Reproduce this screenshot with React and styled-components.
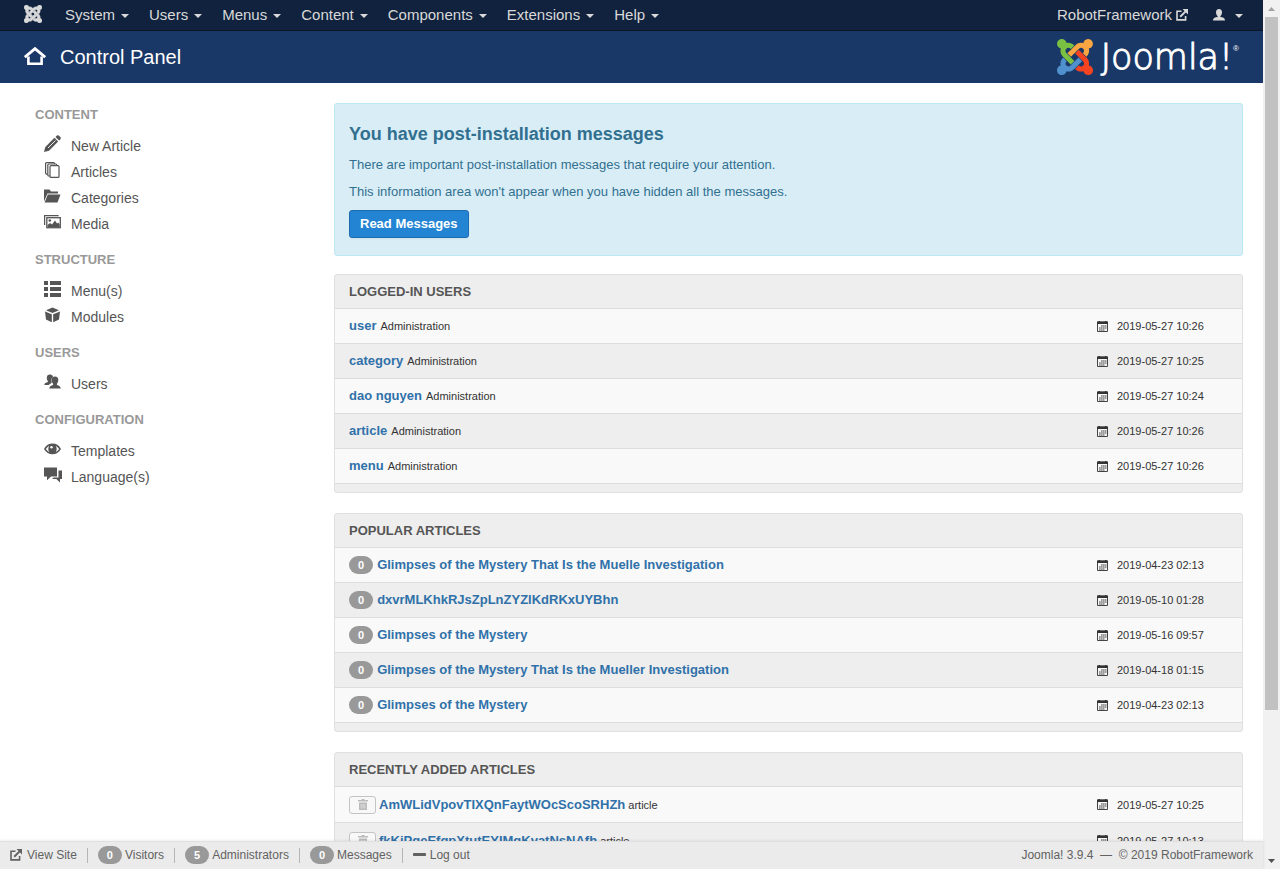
import React from "react";
import styled, { createGlobalStyle } from "styled-components";

const GlobalStyle = createGlobalStyle`
  * { box-sizing: border-box; }
  body {
    margin: 0;
    background: #fff;
    color: #333;
    font-family: "Liberation Sans", Arial, sans-serif;
    font-size: 13px;
    line-height: 18px;
  }
  a { text-decoration: none; }
  h1, h2, h3, p, ul { margin: 0; padding: 0; }
  ul { list-style: none; }
  svg { display: block; flex: none; }
`;

/* ---------- layout ---------- */

const Shell = styled.div`
  display: flex;
  height: 100vh;
  overflow: hidden;
`;

const Page = styled.div`
  flex: 1;
  min-width: 0;
  display: flex;
  flex-direction: column;
`;

const NavBar = styled.nav`
  flex: none;
  display: flex;
  align-items: center;
  height: 31px;
  padding: 0 10px 0 24px;
  background: #10223e;
  border-bottom: 1px solid #0c1526;
`;

const NavBrand = styled.a`
  display: flex;
  margin-right: 13px;
  padding-bottom: 2px;
  color: #d9d9d9;
`;

const NavItem = styled.a`
  display: flex;
  align-items: center;
  gap: ${(p) => p.$gap || 6}px;
  padding: 0 10px;
  font-size: 15px;
  line-height: 30px;
  color: #d9d9d9;
`;

const NavEnd = styled.div`
  display: flex;
  gap: 5px;
  margin-left: auto;
`;

const Caret = styled.span`
  margin-top: 1px;
  border: 4px solid transparent;
  border-top-color: #d9d9d9;
  border-bottom: 0;
`;

const TitleBar = styled.header`
  flex: none;
  display: flex;
  align-items: center;
  height: 52px;
  padding: 0 24px;
  background: #1a3867;
  color: #fff;
`;

const PageTitle = styled.h1`
  display: flex;
  align-items: center;
  gap: 14px;
  flex: 1;
  font-size: 20px;
  line-height: 24px;
  font-weight: 400;
`;

const Logo = styled.a`
  display: flex;
  align-items: center;
  gap: 8px;
  color: #fff;
`;

const Wordmark = styled.span`
  display: flex;
  align-items: flex-start;
  font-family: "DejaVu Sans Light", "DejaVu Sans ExtraLight", "DejaVu Sans", sans-serif;
  font-weight: 200;
  font-size: 35px;
  line-height: 40px;
  -webkit-text-stroke: 1px #fff;
`;

const Registered = styled.sup`
  font-family: "Liberation Sans", Arial, sans-serif;
  font-size: 8px;
  line-height: 24px;
  -webkit-text-stroke: 0;
`;

const Content = styled.div`
  flex: 1;
  min-height: 0;
  overflow: hidden;
  display: grid;
  grid-template-columns: 288px minmax(0, 1fr);
  column-gap: 26px;
  padding: 20px 20px 0;
`;

/* ---------- sidebar ---------- */

const Sidebar = styled.aside`
  display: flex;
  flex-direction: column;
  gap: 14px;
  padding: 3px 0 0 15px;
`;

const GroupTitle = styled.h2`
  margin-bottom: 9px;
  font-size: 13px;
  line-height: 18px;
  font-weight: 700;
  color: #999;
  text-transform: uppercase;
`;

const SideLink = styled.a`
  display: flex;
  align-items: center;
  gap: 9px;
  padding-left: 9px;
  font-size: 14px;
  line-height: 26px;
  color: #555;
  svg { margin-bottom: 4px; }
`;

/* ---------- main column ---------- */

const Alert = styled.section`
  padding: 20px 14px 17px;
  margin-bottom: 18px;
  background: #d9edf7;
  border: 1px solid #bce8f1;
  border-radius: 3px;
  color: #31708f;
`;

const AlertTitle = styled.h2`
  margin-bottom: 12px;
  font-size: 18px;
  line-height: 20px;
  font-weight: 700;
`;

const AlertText = styled.p`
  margin-bottom: 9px;
`;

const PrimaryButton = styled.button`
  display: block;
  height: 28px;
  padding: 0 10px;
  font: 700 13px/18px "Liberation Sans", Arial, sans-serif;
  color: #fff;
  background: #2384d3;
  border: 1px solid #1d6cb0;
  border-radius: 3px;
  box-shadow: 0 1px 2px rgba(0, 0, 0, 0.05);
`;

const Panel = styled.section`
  margin-bottom: 20px;
  padding-bottom: 8px;
  background: #eee;
  border: 1px solid #e0e0e0;
  border-radius: 3px;
`;

const PanelTitle = styled.h2`
  padding: 0 14px;
  font-size: 13px;
  line-height: 33px;
  font-weight: 700;
  color: #555;
  text-transform: uppercase;
`;

const RowList = styled.ul`
  border-bottom: 1px solid #ddd;
`;

const Row = styled.li`
  display: flex;
  align-items: center;
  height: ${(p) => (p.$tall ? 36 : 35)}px;
  padding: 0 14px;
  border-top: 1px solid #ddd;
  background: #f9f9f9;
  &:nth-child(even) { background: #eee; }
`;

const RowMain = styled.div`
  flex: 1;
  min-width: 0;
  display: flex;
  align-items: baseline;
  gap: ${(p) => (p.$tight ? 3 : 4)}px;
`;

const RowLink = styled.a`
  font-weight: 700;
  color: #3071a9;
`;

const Small = styled.small`
  font-size: 11px;
`;

const DateCell = styled.time`
  display: flex;
  align-items: center;
  gap: 9px;
  width: 131px;
  font-size: 11px;
  color: #333;
`;

const Badge = styled.span`
  display: inline-block;
  padding: 2px 9px;
  border-radius: 9px;
  background: #999;
  color: #fff;
  font-size: 11px;
  line-height: 14px;
  font-weight: 700;
`;

const TrashButton = styled.button`
  align-self: center;
  display: flex;
  align-items: center;
  justify-content: center;
  width: 27px;
  height: 18px;
  padding: 0;
  color: #bbb;
  background: #f8f8f8;
  border: 1px solid #c4c4c4;
  border-radius: 3px;
`;

/* ---------- status bar ---------- */

const StatusBar = styled.footer`
  flex: none;
  position: relative;
  display: flex;
  align-items: center;
  height: 28px;
  padding: 0 10px 1px;
  background: #ebebeb;
  border-top: 1px solid #e0e0e0;
  box-shadow: 0 0 3px rgba(0, 0, 0, 0.12);
  font-size: 12px;
  color: #626262;
`;

const StatusItem = styled.a`
  display: flex;
  align-items: center;
  gap: ${(p) => p.$gap || 3}px;
  color: #626262;
  a + & {
    margin-left: 10px;
  }
  a + &::before {
    content: "";
    width: 1px;
    height: 15px;
    margin-right: ${(p) => 10 - (p.$gap || 3)}px;
    background: #b5b5b5;
  }
`;

const Version = styled.span`
  margin-left: auto;
`;

/* ---------- scroll bar ---------- */

const ScrollTrack = styled.div`
  flex: none;
  width: 17px;
  display: flex;
  flex-direction: column;
  align-items: center;
  background: #f1f1f1;
`;

const ScrollEnd = styled.span`
  height: 17px;
  display: flex;
  align-items: center;
`;

const ScrollRail = styled.div`
  flex: 1;
  width: 13px;
`;

const ScrollThumb = styled.div`
  height: ${(p) => p.$size}%;
  background: #c1c1c1;
`;

/* ---------- icons ---------- */

const JOOMLA = [
  ["#7ac143", "M.6 92.1C.6 58.8 27.4 32 60.4 32c30 0 54.5 21.9 59.2 50.2 32.6-7.6 67.1.6 96.5 30l-44.3 44.3c-20.5-20.5-42.6-16.3-55.4-3.5-14.3 14.3-14.3 37.9 0 52.2l99.5 99.5-44 44.3c-87.7-87.2-49.7-49.7-99.8-99.7-26.8-26.5-35-64.8-24.8-98.9C20.4 144.6.6 120.7.6 92.1z"],
  ["#f9a541", "M130.1 208.5l44.3 44.3c10-10 89.7-89.7 99.7-99.8 14.3-14.3 37.6-14.3 51.9 0 12.8 12.8 17 35-3.5 55.4l44 44.3c31.2-31.2 38.5-67.6 28.9-101.2 29.2-4.1 51.9-29.2 51.9-59.5 0-33.2-26.8-60.1-59.8-60.1-30.3 0-55.4 22.5-59.5 51.6-33.8-9.9-71.7-1.5-98.3 25.1-18.3 19.1-71.1 71.5-99.6 99.9z"],
  ["#f44321", "M396.4 360.7c8.2-32.7-.9-68.5-26.3-93.9-11.8-12.2 5 4.7-99.5-99.7l-44.3 44.3 99.7 99.7c14.3 14.3 14.3 37.6 0 51.9-12.8 12.8-35 17-55.4-3.5l-44 44.3c27.6 30.2 68 38.8 102.7 28 5.5 27.4 29.7 48.1 58.9 48.1 33 0 59.8-26.8 59.8-60.1 0-30.2-22.5-55-51.6-59.1z"],
  ["#5091cd", "M312.1 307.6l-44-44.3c-87 86.4-50.4 50.4-99.7 99.8-14.3 14.3-37.6 14.3-51.9 0-13.1-13.4-16.9-35.3 3.2-55.4l-44-44.3c-30.2 30.2-38 65.2-29.5 98.3-26.7 6-46.2 29.9-46.2 58.2C0 453.2 26.8 480 59.8 480c28.6 0 52.5-19.8 58.6-46.7 32.7 8.2 68.5-.6 94.2-26 32.1-32 12.2-12.4 99.5-99.7z"],
];

const JoomlaMark = ({ size, mono }) => (
  <svg width={size} height={size} viewBox="0 32 448 448" aria-hidden="true">
    {JOOMLA.map(([color, d]) => (
      <path
        key={color}
        d={d}
        fill={mono ? "currentColor" : color}
        stroke={mono ? "currentColor" : "none"}
        strokeWidth="18"
      />
    ))}
  </svg>
);

const HomeIcon = () => (
  <svg width="22" height="20" viewBox="0 0 22 20" fill="none" stroke="#fff" aria-hidden="true">
    <path d="M.8 10.200 11 1.600l10.200 8.600" strokeWidth="2.800" />
    <path d="M4.400 9.500v7.200h13.200V9.500" strokeWidth="2.600" />
  </svg>
);

const ExternalIcon = () => (
  <svg width="12" height="12" viewBox="0 0 12 12" fill="none" stroke="currentColor" aria-hidden="true">
    <path d="M5.500 2.300H1v8.600h8.600V7" strokeWidth="1.600" />
    <path d="M4.200 7.800 9.600 2.400" strokeWidth="2" />
    <path d="M6.500 0H12v5.500z" fill="currentColor" stroke="none" />
  </svg>
);

const UserIcon = () => (
  <svg width="12" height="13" viewBox="1 0 12 13" fill="currentColor" aria-hidden="true">
    <path d="M7 0c2 0 3 1.400 3 3.200C10 5 9.300 6.300 8.400 7v1c2.500.3 4.300 1 4.600 3v.5H1V11c.3-2 2.100-2.700 4.600-3V7C4.700 6.300 4 5 4 3.200 4 1.400 5 0 7 0z" />
  </svg>
);

const CalendarIcon = () => (
  <svg width="11" height="11" viewBox="0 0 11 11" aria-label="Date">
    <path d="M.5 1h10v9.500H.5z" fill="#f6f6f6" stroke="#444" />
    <path d="M0 .6h11V3H0z" fill="#333" />
    <path d="M1.500 0H3v1H1.500zM8 0h1.500v1H8z" fill="#333" />
    <path d="M4 5h5.500M2 7h7.500M2 9h5.500" stroke="#444" strokeDasharray="1.700 .3" />
  </svg>
);

const TrashIcon = () => (
  <svg width="10" height="11" viewBox="0 0 10 11" aria-hidden="true">
    <path d="M3.500 0h3v1H10v1.500H0V1h3.500z" fill="currentColor" />
    <path d="M1 3.500h8V11H1z" fill="currentColor" />
    <path d="M3.200 5v4.500M5 5v4.500M6.800 5v4.500" stroke="#f4f4f4" strokeWidth=".6" />
  </svg>
);

const MinusIcon = () => (
  <svg width="13" height="14" viewBox="0 0 13 14" aria-hidden="true">
    <rect y="5" width="13" height="3" rx=".8" fill="currentColor" />
  </svg>
);

const SIDE_ICONS = {
  pencil: (
    <>
      <path d="M0 17l1.300-5L10.500 2.800l3.700 3.700-9.200 9.200z" />
      <path d="M11.500 1.900 12.700.7c.8-.7 1.700-.6 2.400.1l1.200 1.200c.7.8.7 1.600 0 2.400l-1.200 1.200z" />
      <path d="M4 13l7.500-7.500" stroke="#fff" strokeWidth=".9" />
    </>
  ),
  copy: (
    <g fill="#fff" stroke="currentColor" strokeWidth="1.200">
      <rect x="1.600" y="1.600" width="9" height="11.500" rx="1" />
      <rect x="3.800" y="3" width="9" height="12" rx="1" />
      <rect x="6" y="4.600" width="9" height="11.800" rx="1" />
    </g>
  ),
  folder: (
    <>
      <path d="M0 2.500h5.500l1.500 2h7v2H3.500L0 14.500z" />
      <path d="M3.800 7.500H16.500l-3 8H.6z" />
    </>
  ),
  pictures: (
    <>
      <path d="M.6 12V2.600h14" fill="none" stroke="currentColor" strokeWidth="1.200" />
      <rect x="2.800" y="4.700" width="13.500" height="10" fill="#fff" stroke="currentColor" strokeWidth="1.300" />
      <circle cx="5.800" cy="7.500" r="1.300" />
      <path d="M3.500 14v-2l2.500-2 2 1.500L11 7.500l2 3 1.200-1 1.500 2V14z" />
    </>
  ),
  list: (
    <path d="M0 1h4v4H0zM6 1h11v4H6zM0 7h4v4H0zM6 7h11v4H6zM0 13h4v4H0zM6 13h11v4H6z" />
  ),
  cube: (
    <>
      <path d="M8.500 1.500 15 4.200 8.500 7 2 4.200z" />
      <path d="M1 5.500l6.800 2.800v7.900L2 13.500z" />
      <path d="M16 5.500 9.200 8.300v7.900L15 13.500z" />
    </>
  ),
  users: (
    <>
      <path d="M6 1.500c1.700 0 2.900 1 3.100 2.500C7.400 4.800 6.900 7.200 7.800 9.600c-.4.900-2 1.300-3.200 2.400H.3c.2-1.800 1.400-2.300 3.600-3V8C3.200 7.300 2.800 6.100 2.800 4.900 2.800 2.700 4 1.500 6 1.500z" />
      <path d="M11 3.500c2.200 0 3.300 1.300 3.300 3.600 0 1.500-.5 2.800-1.400 3.600v1.200c2.300.5 3.700 1.300 3.900 3.600H5.200c.2-2.300 1.600-3.100 3.900-3.600v-1.200C8.200 9.900 7.700 8.600 7.700 7.100c0-2.300 1.100-3.600 3.300-3.600z" />
    </>
  ),
  eye: (
    <>
      <path d="M0 9c2-3.800 5-5.400 8.500-5.400S15 5.200 17 9c-2 3.600-5 5.200-8.500 5.200S2 12.600 0 9z" />
      <path d="M2 9c.8-1.500 1.900-2.500 3.200-3.100-1.200 2-1.200 4.200 0 6C3.900 11.300 2.800 10.400 2 9zM15 9c-.8-1.500-1.900-2.500-3.200-3.100 1.200 2 1.200 4.200 0 6C13.100 11.300 14.200 10.400 15 9z" fill="#fff" />
      <circle cx="7.500" cy="7.300" r="1.200" fill="#fff" />
    </>
  ),
  comments: (
    <>
      <path d="M0 1.500h13v9H7l-4 3.800v-3.800H0z" />
      <path d="M14.500 4.500H18V13h-2v3.500L12.300 13H8l1.600-1.500h4.900z" />
    </>
  ),
};

const SideIcon = ({ name }) => (
  <svg width="18" height="18" viewBox="0 0 18 18" fill="currentColor" aria-hidden="true">
    {SIDE_ICONS[name]}
  </svg>
);

/* ---------- data ---------- */

const MENUS = ["System", "Users", "Menus", "Content", "Components", "Extensions", "Help"];

const GROUPS = [
  ["Content", [["pencil", "New Article"], ["copy", "Articles"], ["folder", "Categories"], ["pictures", "Media"]]],
  ["Structure", [["list", "Menu(s)"], ["cube", "Modules"]]],
  ["Users", [["users", "Users"]]],
  ["Configuration", [["eye", "Templates"], ["comments", "Language(s)"]]],
];

const LOGGED_IN = [
  ["user", "2019-05-27 10:26"],
  ["category", "2019-05-27 10:25"],
  ["dao nguyen", "2019-05-27 10:24"],
  ["article", "2019-05-27 10:26"],
  ["menu", "2019-05-27 10:26"],
];

const POPULAR = [
  ["Glimpses of the Mystery That Is the Muelle Investigation", "2019-04-23 02:13"],
  ["dxvrMLKhkRJsZpLnZYZlKdRKxUYBhn", "2019-05-10 01:28"],
  ["Glimpses of the Mystery", "2019-05-16 09:57"],
  ["Glimpses of the Mystery That Is the Mueller Investigation", "2019-04-18 01:15"],
  ["Glimpses of the Mystery", "2019-04-23 02:13"],
];

const RECENT = [
  ["AmWLidVpovTIXQnFaytWOcScoSRHZh", "2019-05-27 10:25"],
  ["fkKjPqeEfgpXtutEYIMgKvatNsNAfh", "2019-05-27 10:13"],
];

const Stamp = ({ value }) => (
  <DateCell dateTime={value.replace(" ", "T")}>
    <CalendarIcon />
    {value}
  </DateCell>
);

export default function App() {
  return (
    <Shell>
      <GlobalStyle />
      <Page>
        <NavBar>
          <NavBrand href="#" aria-label="Joomla">
            <JoomlaMark size={18} mono />
          </NavBrand>
          {MENUS.map((label) => (
            <NavItem key={label} href="#">
              {label}
              <Caret />
            </NavItem>
          ))}
          <NavEnd>
            <NavItem href="#" $gap={4}>
              RobotFramework
              <ExternalIcon />
            </NavItem>
            <NavItem href="#" $gap={10} aria-label="User menu">
              <UserIcon />
              <Caret />
            </NavItem>
          </NavEnd>
        </NavBar>

        <TitleBar>
          <PageTitle>
            <HomeIcon />
            Control Panel
          </PageTitle>
          <Logo href="#">
            <JoomlaMark size={36} />
            <Wordmark>
              Joomla!
              <Registered>®</Registered>
            </Wordmark>
          </Logo>
        </TitleBar>

        <Content>
          <Sidebar>
            {GROUPS.map(([title, links]) => (
              <nav key={title} aria-label={title}>
                <GroupTitle>{title}</GroupTitle>
                <ul>
                  {links.map(([icon, label]) => (
                    <li key={label}>
                      <SideLink href="#">
                        <SideIcon name={icon} />
                        {label}
                      </SideLink>
                    </li>
                  ))}
                </ul>
              </nav>
            ))}
          </Sidebar>

          <main>
            <Alert>
              <AlertTitle>You have post-installation messages</AlertTitle>
              <AlertText>There are important post-installation messages that require your attention.</AlertText>
              <AlertText>This information area won't appear when you have hidden all the messages.</AlertText>
              <PrimaryButton type="button">Read Messages</PrimaryButton>
            </Alert>

            <Panel>
              <PanelTitle>Logged-in Users</PanelTitle>
              <RowList>
                {LOGGED_IN.map(([name, date]) => (
                  <Row key={name}>
                    <RowMain>
                      <RowLink href="#">{name}</RowLink>
                      <Small>Administration</Small>
                    </RowMain>
                    <Stamp value={date} />
                  </Row>
                ))}
              </RowList>
            </Panel>

            <Panel>
              <PanelTitle>Popular Articles</PanelTitle>
              <RowList>
                {POPULAR.map(([name, date], i) => (
                  <Row key={i}>
                    <RowMain>
                      <Badge>0</Badge>
                      <RowLink href="#">{name}</RowLink>
                    </RowMain>
                    <Stamp value={date} />
                  </Row>
                ))}
              </RowList>
            </Panel>

            <Panel>
              <PanelTitle>Recently Added Articles</PanelTitle>
              <RowList>
                {RECENT.map(([name, date]) => (
                  <Row key={name} $tall>
                    <RowMain $tight>
                      <TrashButton type="button" aria-label="Trash article">
                        <TrashIcon />
                      </TrashButton>
                      <RowLink href="#">{name}</RowLink>
                      <Small>article</Small>
                    </RowMain>
                    <Stamp value={date} />
                  </Row>
                ))}
              </RowList>
            </Panel>
          </main>
        </Content>

        <StatusBar>
          <StatusItem href="#" $gap={5}>
            <ExternalIcon />
            View Site
          </StatusItem>
          <StatusItem href="#">
            <Badge>0</Badge>
            Visitors
          </StatusItem>
          <StatusItem href="#">
            <Badge>5</Badge>
            Administrators
          </StatusItem>
          <StatusItem href="#">
            <Badge>0</Badge>
            Messages
          </StatusItem>
          <StatusItem href="#" $gap={4}>
            <MinusIcon />
            Log out
          </StatusItem>
          <Version>Joomla! 3.9.4 &nbsp;—&nbsp; © 2019 RobotFramework</Version>
        </StatusBar>
      </Page>

      <ScrollTrack aria-hidden="true">
        <ScrollEnd>
          <svg width="7" height="4" viewBox="0 0 7 4">
            <path d="M0 4 3.500 0 7 4z" fill="#a3a3a3" />
          </svg>
        </ScrollEnd>
        <ScrollRail>
          <ScrollThumb $size={83} />
        </ScrollRail>
        <ScrollEnd>
          <svg width="7" height="4" viewBox="0 0 7 4">
            <path d="M0 0h7L3.500 4z" fill="#505050" />
          </svg>
        </ScrollEnd>
      </ScrollTrack>
    </Shell>
  );
}
